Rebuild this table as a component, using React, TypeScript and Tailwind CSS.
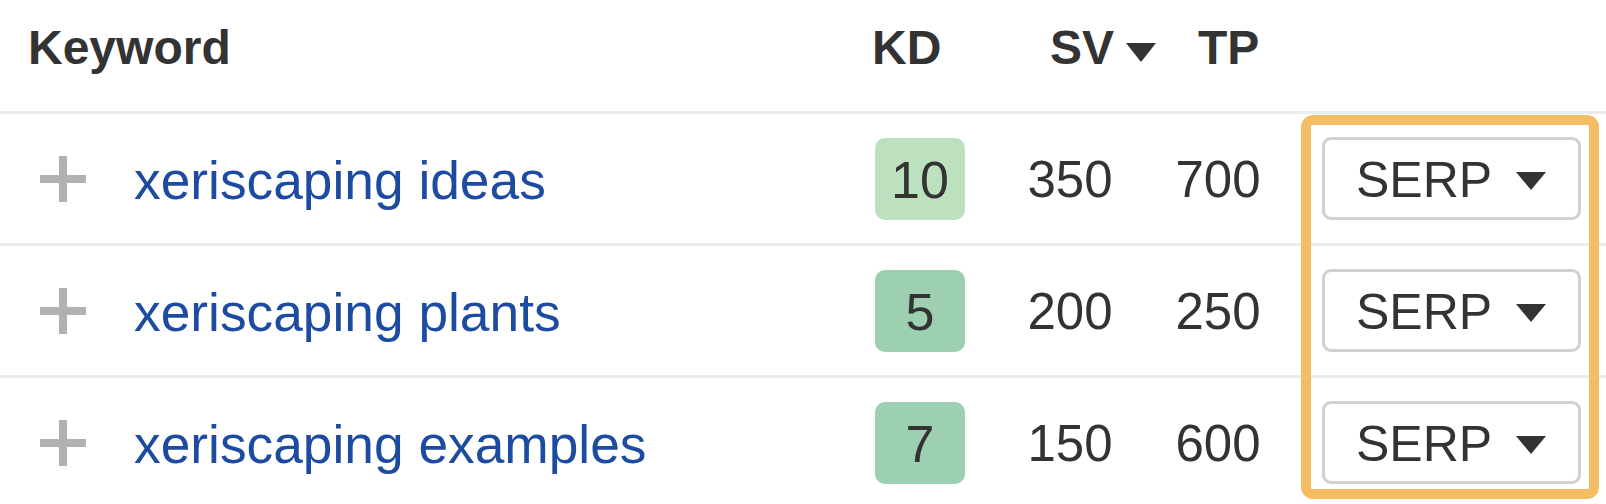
import React from "react";

const rows = [
  { kw: "xeriscaping ideas", kd: 10, kdBg: "bg-[#bde0bf]", sv: 350, tp: 700 },
  { kw: "xeriscaping plants", kd: 5, kdBg: "bg-[#9dcfb1]", sv: 200, tp: 250 },
  { kw: "xeriscaping examples", kd: 7, kdBg: "bg-[#9dcfb1]", sv: 150, tp: 600 },
];

function Tri({ w, h }: { w: number; h: number }) {
  return (
    <svg width={w} height={h} viewBox={`0 0 ${w} ${h}`} className="block">
      <polygon points={`0,0 ${w},0 ${w / 2},${h}`} fill="#333333" />
    </svg>
  );
}

function Plus() {
  return (
    <div className="relative w-[46px] h-[46px] shrink-0">
      <div className="absolute left-0 top-[19px] w-[46px] h-[8px] bg-[#b1b1b1]" />
      <div className="absolute left-[19px] top-0 w-[8px] h-[46px] bg-[#b1b1b1]" />
    </div>
  );
}

export default function App() {
  return (
    <div
      className="relative w-[1606px] h-[504px] overflow-hidden bg-white text-[#333333]"
      style={{ fontFamily: '"Liberation Sans", Arial, Helvetica, sans-serif' }}
    >
      {/* Header */}
      <div className="flex h-[114px] border-b-[3px] border-[#ececec] pt-[20px] font-bold text-[48px] leading-[1.15]">
        <div className="w-[872px] pl-[28px]">Keyword</div>
        <div className="w-[178px]">KD</div>
        <div className="w-[148px] flex items-start">
          <span>SV</span>
          <span className="ml-[12px] mt-[23px]">
            <Tri w={30} h={19} />
          </span>
        </div>
        <div>TP</div>
      </div>

      {/* Rows */}
      {rows.map((r) => (
        <div key={r.kw} className="flex h-[132px] border-b-[3px] border-[#ececec]">
          <div className="w-[844px] flex items-center pl-[40px]">
            <Plus />
            <span className="ml-[48px] pt-[4px] text-[53.3px] text-[#1c4b9f] whitespace-nowrap">{r.kw}</span>
          </div>
          <div className="w-[152px] flex items-center justify-center">
            <div
              className={`w-[90px] h-[82px] rounded-[10px] ${r.kdBg} flex items-center justify-center pt-[3px] text-[52px]`}
            >
              {r.kd}
            </div>
          </div>
          <div className="w-[148px] flex items-center justify-center pt-[4px] text-[51px]">{r.sv}</div>
          <div className="w-[148px] flex items-center justify-center pt-[4px] text-[51px]">{r.tp}</div>
          <div className="flex-1 flex items-center pl-[30px]">
            <div className="w-[259px] h-[83px] border-[3px] border-[#d0d0d0] rounded-[9px] flex items-center pl-[31px] bg-white">
              <span className="text-[50px] pt-[4px]">SERP</span>
              <span className="ml-[24px] pt-[4px]">
                <Tri w={30} h={18} />
              </span>
            </div>
          </div>
        </div>
      ))}

      {/* Highlight overlay */}
      <div className="absolute left-[1301px] top-[115px] w-[298px] h-[384px] border-[10px] border-[#f4bc63] rounded-[12px] pointer-events-none" />
    </div>
  );
}
